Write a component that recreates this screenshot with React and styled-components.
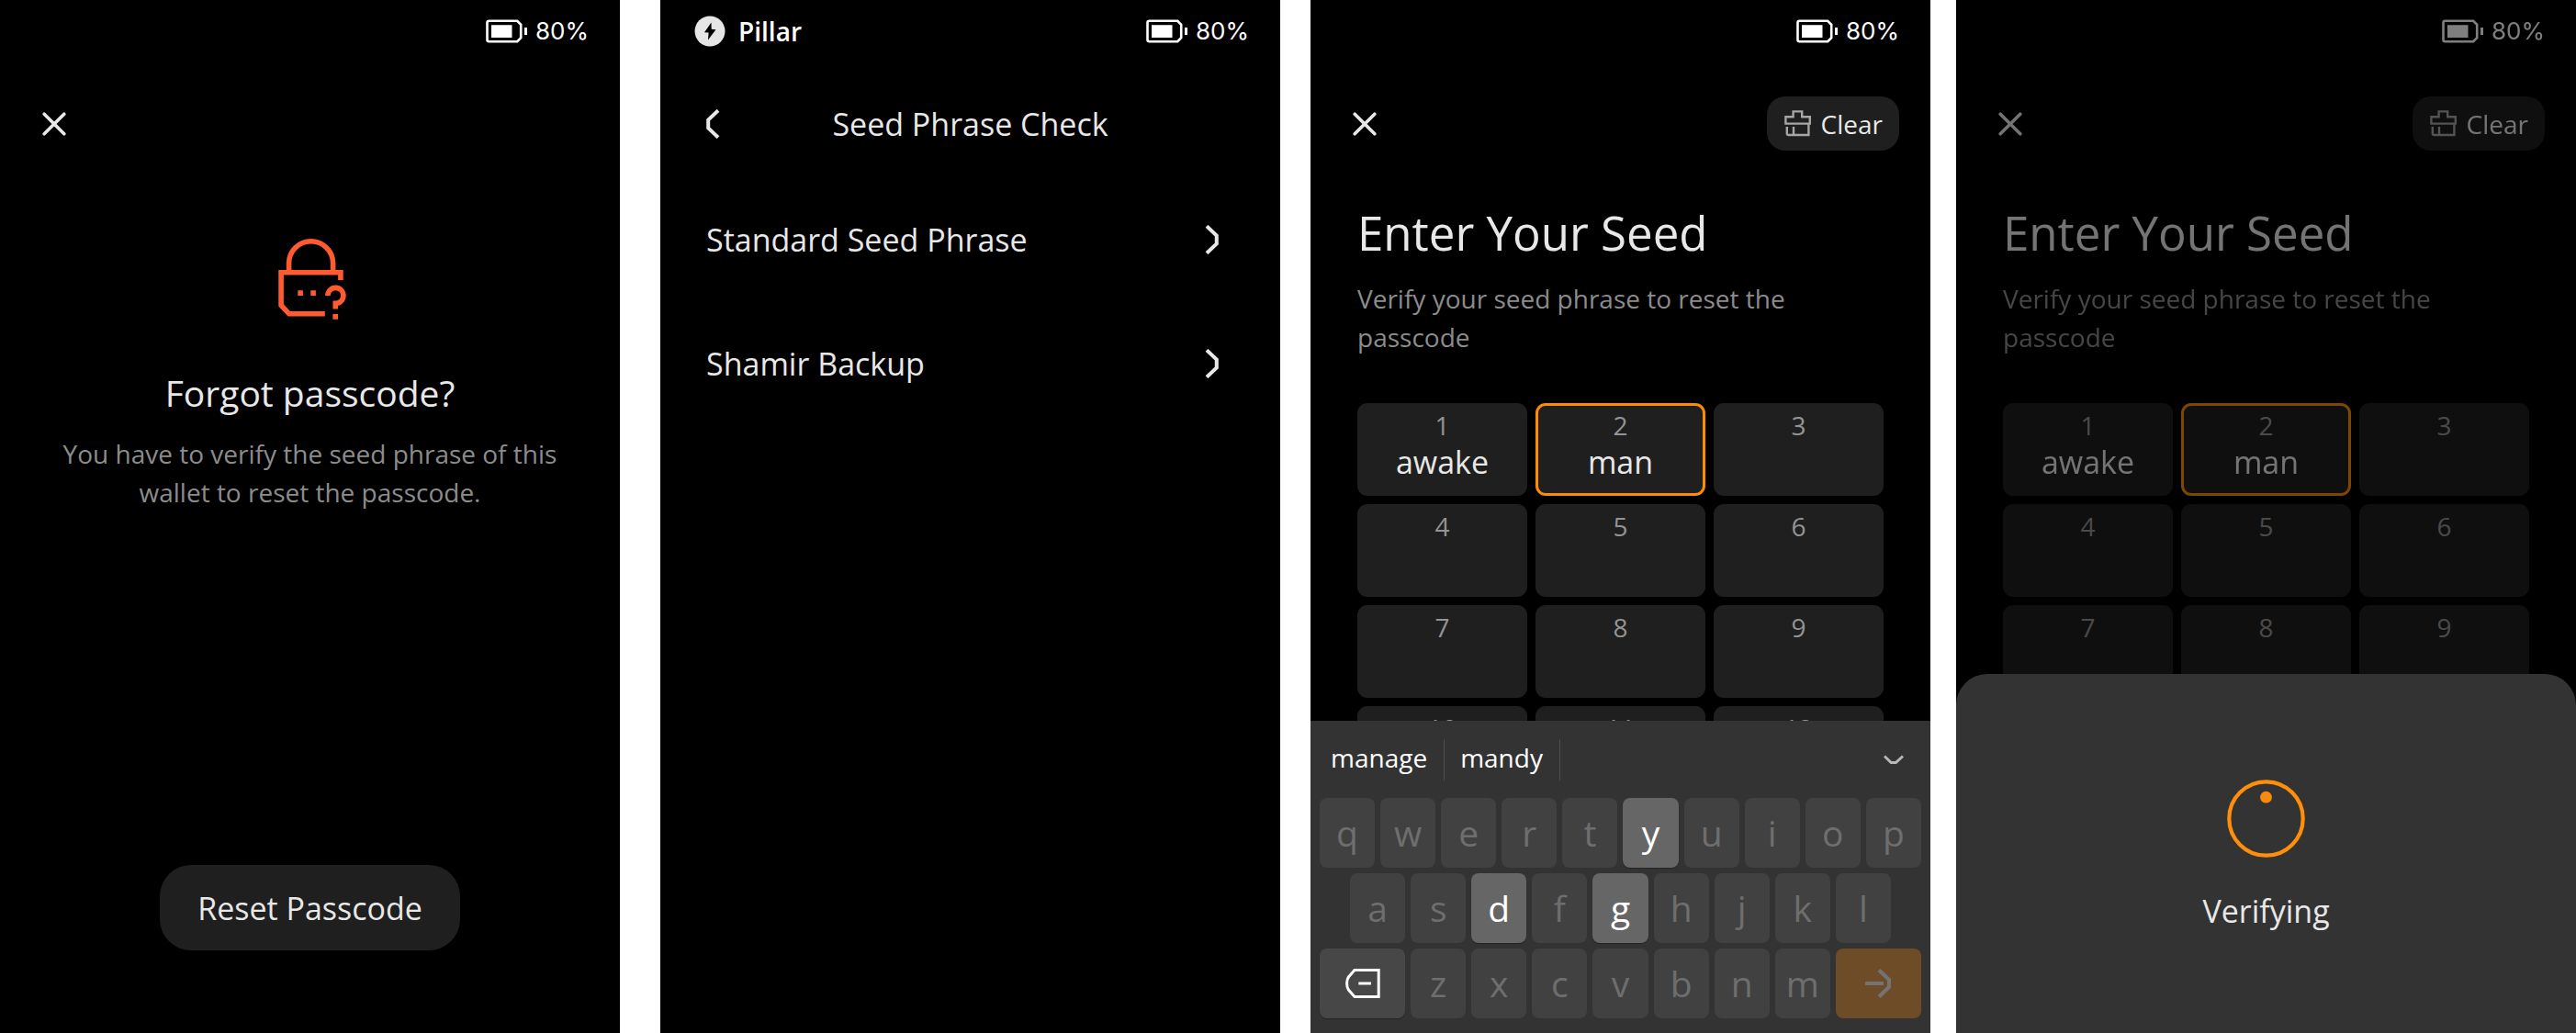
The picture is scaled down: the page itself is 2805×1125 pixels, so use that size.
import React from "react";
import styled, { createGlobalStyle } from "styled-components";

const GlobalStyle = createGlobalStyle`
  * { box-sizing: border-box; }
  body {
    margin: 0;
    background: #fff;
    color: #e8e8e8;
    font-family: "Open Sans", "Noto Sans", sans-serif;
    font-size: 28px;
  }
  button, input { font: inherit; color: inherit; border: 0; margin: 0; padding: 0; background: none; }
  svg { display: block; flex: none; }
`;

/* ---------- layout ---------- */

const Board = styled.main`
  display: flex;
  height: 100vh;
`;

const Screen = styled.section`
  position: relative;
  display: flex;
  flex: 1 1 0;
  flex-direction: column;
  min-width: 0;
  margin-left: ${(p) => p.$gap || 0}px;
  overflow: hidden;
  background: #000;
`;

const Dimmed = styled.div`
  display: flex;
  flex: 1;
  flex-direction: column;
  min-height: 0;
  opacity: 0.5;
`;

const StatusRow = styled.header`
  display: flex;
  flex: none;
  align-items: center;
  justify-content: space-between;
  height: 67px;
  padding: 0 34px 0 37px;
`;

const Wallet = styled.div`
  display: flex;
  align-items: center;
  gap: 14px;
  color: #fff;
  font-weight: 600;
`;

const Battery = styled.div`
  display: flex;
  align-items: center;
  gap: 8px;
  margin-left: auto;
  color: #fff;
  font-family: Inter, "Open Sans", sans-serif;
  font-size: 26px;
`;

const NavRow = styled.nav`
  display: grid;
  flex: none;
  grid-template-columns: 1fr auto 1fr;
  align-items: center;
  height: 135px;
  padding: 0 34px;
`;

const NavTitle = styled.h2`
  grid-column: 2;
  margin: 0;
  font-size: 34px;
  font-weight: 400;
  line-height: 46px;
`;

const IconButton = styled.button`
  display: flex;
  align-items: center;
  justify-content: flex-start;
  width: 60px;
  height: 60px;
  padding-left: ${(p) => p.$inset}px;
`;

const ClearButton = styled.button`
  display: flex;
  grid-column: 3;
  justify-self: end;
  align-items: center;
  gap: 10px;
  height: 59px;
  padding: 0 18px 0 19px;
  border-radius: 20px;
  background: #1f1f1f;
  line-height: 42px;
`;

/* ---------- forgot passcode ---------- */

const Notice = styled.div`
  display: flex;
  flex: 1;
  flex-direction: column;
  align-items: center;
  padding: 58px 51px 0;
  text-align: center;
`;

const NoticeTitle = styled.h1`
  margin: 53px 0 18px;
  font-size: 39px;
  font-weight: 400;
  line-height: 54px;
`;

const Description = styled.p`
  margin: 0;
  color: #8c8c8c;
  font-size: 28px;
  line-height: 42px;
`;

const PillButton = styled.button`
  align-self: center;
  height: 93px;
  margin-bottom: 90px;
  padding: 0 41px;
  border-radius: 34px;
  background: #1f1f1f;
  font-size: 34px;
`;

/* ---------- seed phrase check ---------- */

const OptionList = styled.div`
  display: flex;
  flex-direction: column;
  gap: 17px;
`;

const Option = styled.button`
  display: flex;
  align-items: center;
  justify-content: space-between;
  height: 118px;
  padding: 0 67px 0 50px;
  font-size: 34px;
  text-align: left;
`;

/* ---------- seed entry ---------- */

const SeedBody = styled.div`
  display: flex;
  flex: 1;
  flex-direction: column;
  min-height: 0;
  padding: 17px 51px 0;
  overflow: hidden;
`;

const SeedTitle = styled.h1`
  margin: 0 0 17px;
  font-size: 51px;
  font-weight: 400;
  line-height: 68px;
`;

const SeedGrid = styled.div`
  display: grid;
  grid-template-columns: repeat(3, 1fr);
  grid-auto-rows: 101px;
  gap: 9px;
  margin-top: 51px;
`;

const SeedCell = styled.label`
  display: flex;
  flex-direction: column;
  align-items: center;
  min-width: 0;
  padding-top: 7px;
  border-radius: 11px;
  background: #1f1f1f;
  box-shadow: ${(p) => (p.$active ? "inset 0 0 0 3px #ff8c00" : "none")};
`;

const SeedNumber = styled.span`
  color: #949494;
  line-height: 34px;
`;

const SeedInput = styled.input`
  width: 100%;
  height: 46px;
  outline: 0;
  font-size: 34px;
  text-align: center;
`;

/* ---------- keyboard ---------- */

const Keyboard = styled.div`
  flex: none;
  padding: 0 10px 16px;
  background: #333;
`;

const Suggestions = styled.div`
  display: flex;
  align-items: center;
  height: 84px;
  padding-right: 19px;
`;

const Suggestion = styled.button`
  height: 45px;
  padding: 0 18px 5px 17px;
  border-right: 1px solid #4d4d4d;
  color: #fff;
  line-height: 40px;

  &:first-child { padding-left: 12px; }
`;

const CollapseButton = styled.button`
  margin-left: auto;
`;

const Keys = styled.div`
  display: grid;
  grid-template-columns: repeat(20, 1fr);
  grid-auto-rows: 76px;
  gap: 6px;
`;

const keyTones = {
  off: ["#414141", "#6e6e6e"],
  on: ["#666", "#fff"],
  erase: ["#474747", "#fff"],
  confirm: ["#6d4c27", "#737373"],
};

const Key = styled.button`
  display: flex;
  grid-column: ${(p) => (p.$indent ? "2 / span 2" : `span ${p.$span || 2}`)};
  align-items: center;
  justify-content: center;
  min-width: 0;
  border-radius: 8px;
  background: ${(p) => keyTones[p.$tone][0]};
  color: ${(p) => keyTones[p.$tone][1]};
  box-shadow: 0 1px 1px rgba(0, 0, 0, ${(p) => (p.$tone === "on" || p.$tone === "erase" ? 0.3 : 0)});
  font-size: 39px;
  line-height: 54px;
`;

/* ---------- verifying sheet ---------- */

const Sheet = styled.div`
  position: absolute;
  right: 0;
  bottom: 0;
  left: 0;
  display: flex;
  flex-direction: column;
  align-items: center;
  gap: 35px;
  padding: 115px 0 110px;
  border-radius: 34px 34px 0 0;
  background: #333;
  font-size: 34px;
  line-height: 46px;
`;

/* ---------- icons ---------- */

const BatteryIcon = () => (
  <svg width="46" height="26" viewBox="0 0 46 26" fill="none" aria-hidden="true">
    <path d="M3.5 1.8H34.2L38.2 5.8V20.2L34.2 24.2H3.5Q1.5 24.2 1.5 22.2V3.8Q1.5 1.8 3.5 1.8Z" stroke="currentColor" strokeWidth="2.6" />
    <path d="M6 6.2H28.5V20H6ZM42 9H45V17H42Z" fill="currentColor" />
  </svg>
);

const BoltLogo = () => (
  <svg width="34" height="34" viewBox="-17 -17 34 34" aria-hidden="true">
    <circle r="16.5" fill="#e6e6e6" />
    <path d="M1.5 -9.5L-6 1.2L-1.4 1.6L-2 9.5L6.5 -1.8L1.7 -2.2Z" fill="#000" />
  </svg>
);

const CloseIcon = () => (
  <svg width="26" height="26" viewBox="0 0 26 26" fill="none" stroke="currentColor" strokeWidth="3.6" strokeLinecap="round" aria-hidden="true">
    <path d="M2.2 2.2L23.8 23.8M23.8 2.2L2.2 23.8" />
  </svg>
);

const BackIcon = () => (
  <svg width="15" height="32" viewBox="0 0 15 32" fill="none" stroke="currentColor" strokeWidth="4" aria-hidden="true">
    <path d="M13 1.3L2.2 11.6V20.4L13 30.7" />
  </svg>
);

const NextIcon = () => (
  <svg width="15" height="32" viewBox="0 0 15 32" fill="none" stroke="currentColor" strokeWidth="4" aria-hidden="true">
    <path d="M2 1.3L12.8 11.6V20.4L2 30.7" />
  </svg>
);

const LockIcon = () => (
  <svg width="78" height="88" viewBox="-4 0 78 88" fill="none" stroke="#ff5a30" strokeWidth="5.6" aria-hidden="true">
    <path d="M11.6 36V26.8A24 24 0 0 1 59.6 26.8V36" />
    <path d="M67.9 45V36.8H3.1V72.5L11.8 81.8H50.8" />
    <path d="M53.9 62A8.5 8.5 0 1 1 62.3 70.4V76.4" />
    <path d="M21.3 56.3h5.6v5.7h-5.6zM35.3 56.3h5.6v5.7h-5.6zM59.4 82h5.7v5.7h-5.7z" fill="#ff5a30" stroke="none" />
  </svg>
);

const BrushIcon = () => (
  <svg width="30" height="29" viewBox="0 0 30 29" fill="none" stroke="#a6a6a6" strokeWidth="2.4" aria-hidden="true">
    <path d="M9.6 7.2V1.4H19.2V7.2H27.8V14.6H1.4V7.2Z" />
    <path d="M26.4 14.6V27H4.6Q2.8 27 2.8 25.2V18M10 18V27" />
  </svg>
);

const ChevronDownIcon = () => (
  <svg width="22" height="11" viewBox="0 0 22 11" fill="none" stroke="#b8b8b8" strokeWidth="3" aria-hidden="true">
    <path d="M1 1.5L8.2 8.6H13.4L21 1.5" />
  </svg>
);

const EraseIcon = () => (
  <svg width="38" height="32" viewBox="0 0 38 32" fill="none" stroke="currentColor" strokeWidth="3" aria-hidden="true">
    <path d="M36.2 1.5V30.5H10L3.4 23Q1.6 20.5 1.6 16Q1.6 11.5 3.4 9L10 1.5Z" />
    <path d="M14.3 16H28" />
  </svg>
);

const ConfirmIcon = () => (
  <svg width="28" height="32" viewBox="0 0 28 32" fill="none" stroke="currentColor" strokeWidth="4.2" aria-hidden="true">
    <path d="M0 16H20M15 1.5L26 12V20L15 30.5" />
  </svg>
);

const SpinnerIcon = () => (
  <svg width="85" height="85" viewBox="0 0 85 85" aria-hidden="true">
    <circle cx="42.5" cy="42.5" r="40.2" fill="none" stroke="#ff8f0a" strokeWidth="4.2" />
    <circle cx="42.5" cy="19.2" r="6.4" fill="#f98b0b" />
  </svg>
);

/* ---------- parts ---------- */

const Status = ({ wallet }) => (
  <StatusRow>
    {wallet && (
      <Wallet>
        <BoltLogo />
        {wallet}
      </Wallet>
    )}
    <Battery>
      <BatteryIcon />
      80%
    </Battery>
  </StatusRow>
);

const CloseButton = () => (
  <IconButton type="button" aria-label="Close" $inset={12}>
    <CloseIcon />
  </IconButton>
);

const words = ["awake", "man", "", "", "", "", "", "", "", "", "", ""];

const SeedEntry = () => (
  <>
    <Status />
    <NavRow>
      <CloseButton />
      <ClearButton type="button">
        <BrushIcon />
        Clear
      </ClearButton>
    </NavRow>
    <SeedBody>
      <SeedTitle>Enter Your Seed</SeedTitle>
      <Description>Verify your seed phrase to reset the passcode</Description>
      <SeedGrid>
        {words.map((word, i) => (
          <SeedCell key={i} $active={i === 1}>
            <SeedNumber>{i + 1}</SeedNumber>
            <SeedInput type="text" defaultValue={word} />
          </SeedCell>
        ))}
      </SeedGrid>
    </SeedBody>
  </>
);

const enabledKeys = "ydg";

const LetterKeys = ({ letters, indent }) =>
  letters.split("").map((letter, i) => (
    <Key key={letter} type="button" $indent={indent && i === 0} $tone={enabledKeys.includes(letter) ? "on" : "off"}>
      {letter}
    </Key>
  ));

export default function App() {
  return (
    <>
      <GlobalStyle />
      <Board>
        <Screen>
          <Status />
          <NavRow>
            <CloseButton />
          </NavRow>
          <Notice>
            <LockIcon />
            <NoticeTitle>Forgot passcode?</NoticeTitle>
            <Description>You have to verify the seed phrase of this wallet to reset the passcode.</Description>
          </Notice>
          <PillButton type="button">Reset Passcode</PillButton>
        </Screen>

        <Screen $gap={44}>
          <Status wallet="Pillar" />
          <NavRow>
            <IconButton type="button" aria-label="Back" $inset={16}>
              <BackIcon />
            </IconButton>
            <NavTitle>Seed Phrase Check</NavTitle>
          </NavRow>
          <OptionList>
            <Option type="button">
              Standard Seed Phrase
              <NextIcon />
            </Option>
            <Option type="button">
              Shamir Backup
              <NextIcon />
            </Option>
          </OptionList>
        </Screen>

        <Screen $gap={33}>
          <SeedEntry />
          <Keyboard>
            <Suggestions>
              <Suggestion type="button">manage</Suggestion>
              <Suggestion type="button">mandy</Suggestion>
              <CollapseButton type="button" aria-label="Hide keyboard">
                <ChevronDownIcon />
              </CollapseButton>
            </Suggestions>
            <Keys>
              <LetterKeys letters="qwertyuiop" />
              <LetterKeys letters="asdfghjkl" indent />
              <Key type="button" aria-label="Delete" $span={3} $tone="erase">
                <EraseIcon />
              </Key>
              <LetterKeys letters="zxcvbnm" />
              <Key type="button" aria-label="Confirm" $span={3} $tone="confirm">
                <ConfirmIcon />
              </Key>
            </Keys>
          </Keyboard>
        </Screen>

        <Screen $gap={28}>
          <Dimmed>
            <SeedEntry />
          </Dimmed>
          <Sheet role="status">
            <SpinnerIcon />
            Verifying
          </Sheet>
        </Screen>
      </Board>
    </>
  );
}
